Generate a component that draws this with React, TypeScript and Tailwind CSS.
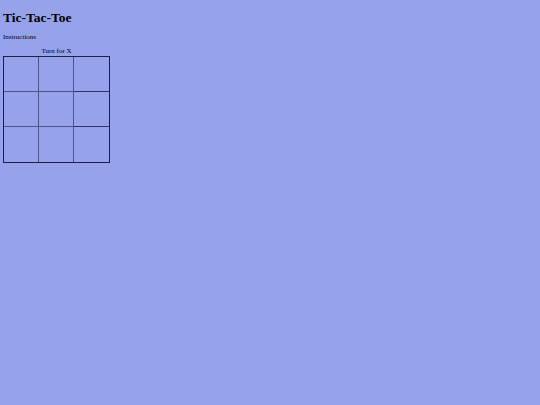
import React from 'react';

const cells = Array.from({ length: 9 }, (_, i) => i);

export default function App() {
  return (
    <div className="min-h-[405px] w-full bg-[#96a2ea] px-[3px] pt-[10px] text-black [font-family:'Liberation_Serif',serif]">
      <h1 className="text-[13.5px] font-bold leading-[16px]">Tic-Tac-Toe</h1>
      <p className="mt-[7px] text-[7px] leading-[8px]">Instructions</p>
      <div className="mt-[6px] w-[107px]">
        <div className="text-center text-[7px] leading-[8px]">Turn for X</div>
        <div className="mt-[1px] grid grid-cols-3 border border-[#1c1f3f]">
          {cells.map((i) => (
            <div
              key={i}
              className={
                'h-[35px] ' +
                (i % 3 !== 2 ? 'border-r border-[#4d5388] ' : '') +
                (i < 6 ? 'border-b border-[#2e3260]' : '')
              }
            />
          ))}
        </div>
      </div>
    </div>
  );
}
